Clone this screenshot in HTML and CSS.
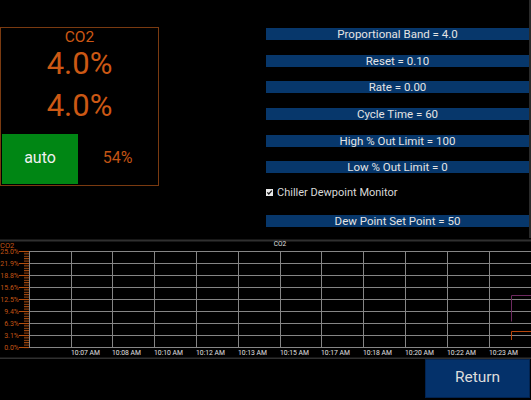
FILE: index.html
```html
<!DOCTYPE html>
<html>
<head>
<meta charset="utf-8">
<link rel="stylesheet" href="styles.css">
</head>
<body>
<div class="screen">
  <div class="top">
    <div class="loop">
      <div class="name">CO2</div>
      <div class="big">4.0%</div>
      <div class="big big2">4.0%</div>
      <div class="out-row">
        <div class="mode">auto</div>
        <div class="pct">54%</div>
      </div>
    </div>
    <div class="params">
      <div class="bar">Proportional Band = 4.0</div>
      <div class="bar">Reset = 0.10</div>
      <div class="bar">Rate = 0.00</div>
      <div class="bar">Cycle Time = 60</div>
      <div class="bar">High % Out Limit = 100</div>
      <div class="bar">Low % Out Limit = 0</div>
      <div class="check">
        <svg class="box" width="7" height="7" viewBox="0 0 7 7"><rect x="0" y="0" width="7" height="7" fill="#e8e8e8"/><path d="M1.3 3.4 L2.8 5 L5.8 1.6" stroke="#111" stroke-width="1.3" fill="none"/></svg>
        <span>Chiller Dewpoint Monitor</span>
      </div>
      <div class="bar">Dew Point Set Point = 50</div>
    </div>
  </div>
  <div class="chart">
    <svg width="531" height="121" viewBox="0 238 531 121">
      <defs>
        <pattern id="ticks" x="0" y="251" width="6" height="2.4" patternUnits="userSpaceOnUse">
          <rect x="0" y="0" width="6" height="1" fill="#b4500f"/>
        </pattern>
      </defs>
      <rect x="0" y="239.5" width="531" height="2" fill="#303030"/>
      <rect x="0" y="357.5" width="531" height="1.5" fill="#303030"/>
      <text class="axis-title" x="0" y="247.5">CO2</text>
      <text class="chart-title" x="280" y="245.5" text-anchor="middle">CO2</text>
      <g class="grid">
        <path d="M29 251.5H531M29 263.5H531M29 275.5H531M29 287.5H531M29 299.5H531M29 311.5H531M29 323.5H531M29 335.5H531M29 347.5H531"/>
        <path d="M29.5 251V348M71.5 251V348M112.5 251V348M154.5 251V348M196.5 251V348M238.5 251V348M280.5 251V348M321.5 251V348M363.5 251V348M405.5 251V348M447.5 251V348M489.5 251V348"/>
      </g>
      <rect x="24" y="251" width="5" height="97.5" fill="url(#ticks)"/>
      <path class="major" d="M19 251.5H29M19 263.5H29M19 275.5H29M19 287.5H29M19 299.5H29M19 311.5H29M19 323.5H29M19 335.5H29M19 347.5H29"/>
      <g class="ylabels" text-anchor="end">
        <text x="19" y="254">25.0%</text>
        <text x="19" y="266">21.9%</text>
        <text x="19" y="278">18.8%</text>
        <text x="19" y="290">15.6%</text>
        <text x="19" y="302">12.5%</text>
        <text x="19" y="314">9.4%</text>
        <text x="19" y="326">6.3%</text>
        <text x="19" y="338">3.1%</text>
        <text x="19" y="350">0.0%</text>
      </g>
      <g class="xlabels">
        <text x="71" y="354.5">10:07 AM</text>
        <text x="112" y="354.5">10:08 AM</text>
        <text x="154" y="354.5">10:10 AM</text>
        <text x="196" y="354.5">10:12 AM</text>
        <text x="238" y="354.5">10:13 AM</text>
        <text x="280" y="354.5">10:15 AM</text>
        <text x="321" y="354.5">10:17 AM</text>
        <text x="363" y="354.5">10:18 AM</text>
        <text x="405" y="354.5">10:20 AM</text>
        <text x="447" y="354.5">10:22 AM</text>
        <text x="489" y="354.5">10:23 AM</text>
      </g>
      <path class="series-a" d="M511.5 321.5V295.5H531"/>
      <path class="series-b" d="M511.5 340V331.5H531"/>
    </svg>
  </div>
  <div class="bottom">
    <button class="return">Return</button>
  </div>
</div>
</body>
</html>
```

FILE: styles.css
```css
html, body {
  margin: 0;
  padding: 0;
  background: #000;
}
body {
  font-family: Roboto, "Liberation Sans", sans-serif;
}
.screen {
  width: 531px;
  height: 400px;
  overflow: hidden;
  display: flex;
  flex-direction: column;
  background: #000;
}
.top {
  width: 531px;
  height: 238px;
  box-sizing: border-box;
  border-right: 2px solid #2a2a2a;
  display: flex;
  align-items: flex-start;
}
.loop {
  margin-top: 27px;
  width: 159px;
  height: 159px;
  box-sizing: border-box;
  border: 1px solid #7a3a10;
  padding: 0 1px 1px 1px;
  display: flex;
  flex-direction: column;
  align-items: center;
  color: #cc5814;
}
.name {
  font-size: 15.5px;
  line-height: 17px;
  margin-top: 1px;
}
.big {
  font-size: 31px;
  line-height: 36px;
}
.big2 {
  margin-top: 6px;
}
.out-row {
  margin-top: 10px;
  align-self: stretch;
  height: 50px;
  display: flex;
}
.mode {
  width: 76px;
  background: #008614;
  color: #f0f0f0;
  font-size: 16px;
  display: flex;
  align-items: center;
  justify-content: center;
  padding-bottom: 3px;
  box-sizing: border-box;
}
.pct {
  flex: 1;
  display: flex;
  align-items: center;
  justify-content: center;
  font-size: 16px;
  color: #c25414;
  padding-bottom: 3px;
}
.params {
  margin-left: 107px;
  width: 263px;
  padding-top: 28px;
  display: flex;
  flex-direction: column;
  gap: 14.67px;
}
.bar {
  height: 12px;
  line-height: 12px;
  background: #07376b;
  color: #e4e4e4;
  font-size: 11.5px;
  text-align: center;
  white-space: nowrap;
}
.check {
  height: 12px;
  display: flex;
  align-items: center;
  gap: 4px;
  color: #d8d8d8;
  font-size: 11px;
  margin-top: -1px;
  margin-bottom: 1px;
}
.check .box {
  display: block;
}
.chart {
  height: 121px;
}
.chart svg {
  display: block;
}
.grid path {
  stroke: #858585;
  stroke-width: 1;
  fill: none;
}
.major {
  stroke: #b4500f;
  stroke-width: 1;
  fill: none;
}
.series-a {
  stroke: #6e2a60;
  stroke-width: 1;
  fill: none;
}
.series-b {
  stroke: #b8460c;
  stroke-width: 1;
  fill: none;
}
.axis-title {
  font-size: 7.5px;
  fill: #c25414;
  font-family: Roboto, sans-serif;
}
.chart-title {
  font-size: 6.5px;
  fill: #e0e0e0;
  font-family: Roboto, sans-serif;
}
.ylabels text {
  font-size: 7px;
  fill: #c25414;
  font-family: Roboto, sans-serif;
}
.xlabels text {
  font-size: 6.8px;
  fill: #e0e0e0;
  font-family: Roboto, sans-serif;
}
.bottom {
  height: 41px;
  display: flex;
  justify-content: flex-end;
  padding-right: 1px;
}
.return {
  width: 105px;
  height: 39px;
  margin: 0;
  padding: 0 0 3px 0;
  background: #04316a;
  border: 1px solid #022350;
  color: #dcdcdc;
  font-family: Roboto, "Liberation Sans", sans-serif;
  font-size: 15.5px;
}
```
